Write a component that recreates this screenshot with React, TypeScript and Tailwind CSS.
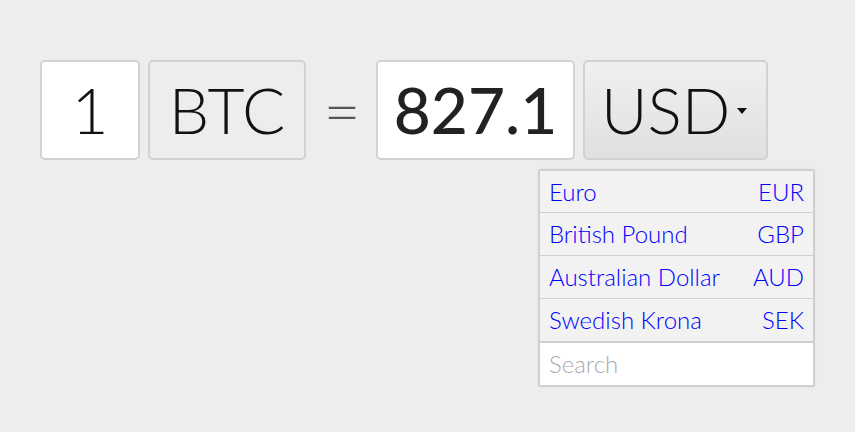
import React from "react";

const rows = [
  { name: "Euro", code: "EUR" },
  { name: "British Pound", code: "GBP" },
  { name: "Australian Dollar", code: "AUD" },
  { name: "Swedish Krona", code: "SEK" },
];

export default function App() {
  return (
    <div className="w-full h-[432px] bg-[#ededed] pt-[60px] pl-[40px] font-['Lato',sans-serif] overflow-hidden">
      <div className="flex items-stretch h-[100px]">
        <div className="w-[100px] h-[100px] bg-white border-2 border-[#d2d2d2] rounded-[5px] flex items-center justify-center text-[64px] font-light leading-none text-[#111]">
          1
        </div>
        <div className="ml-[8px] w-[158px] h-[100px] bg-[#ededed] border-2 border-[#d2d2d2] rounded-[5px] flex items-center justify-center text-[64px] font-light leading-none text-[#111]">
          BTC
        </div>
        <div className="w-[70px] h-[100px] flex items-center justify-center pl-[2px] text-[64px] font-light leading-none text-[#555]">
          =
        </div>
        <div className="w-[199px] h-[100px] bg-white border-2 border-[#d2d2d2] rounded-[5px] flex items-center justify-center text-[64px] font-medium leading-none text-[#222]">
          827.1
        </div>
        <div className="relative ml-[8px]">
          <div className="w-[185px] h-[100px] bg-gradient-to-b from-[#f0f0f0] to-[#e0e0e0] border-2 border-[#d2d2d2] rounded-[5px] flex items-center pl-[16px] text-[64px] font-light leading-none text-[#111]">
            <span>USD</span>
            <svg width="10" height="6" viewBox="0 0 10 6" className="ml-[7px] mt-[2px]">
              <path d="M0 0 L10 0 L5 6 Z" fill="#111" />
            </svg>
          </div>
          <div className="absolute top-[109px] left-[-45px] w-[277px] border-2 border-[#cfcfcf] rounded-[3px] bg-[#f2f2f2] shadow-[0_0_2px_rgba(0,0,0,0.08)]">
            {rows.map((r, i) => (
              <div
                key={r.code}
                className={`${i === 0 ? "h-[41px]" : "h-[43px] border-t border-[#cfcfcf]"} flex items-center justify-between pl-[9px] pr-[9px] text-[24px] font-light leading-none text-[#0000ff]`}
              >
                <span>{r.name}</span>
                <span>{r.code}</span>
              </div>
            ))}
            <div className="h-[44px] bg-white border-t-2 border-[#cfcfcf] flex items-center pl-[9px] text-[24px] font-light leading-none text-[#aaaaaa]">
              Search
            </div>
          </div>
        </div>
      </div>
    </div>
  );
}
